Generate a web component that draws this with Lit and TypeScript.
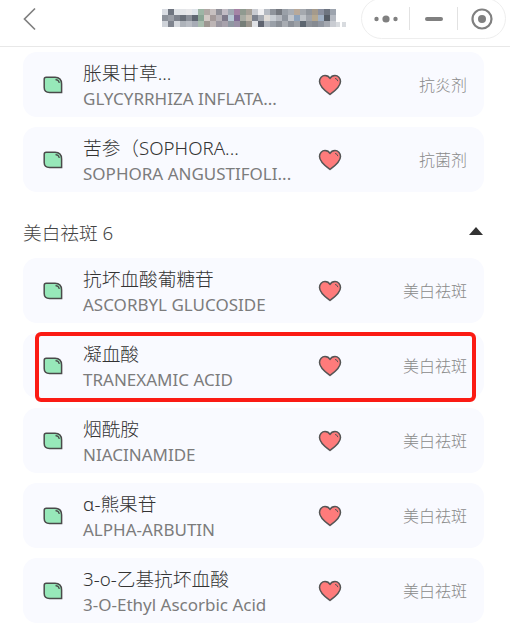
import { LitElement, html, css, svg } from "lit";
import { customElement } from "lit/decorators.js";

const leaf = html`<svg class="leaf" width="20" height="18" viewBox="0 0 20 18"><path d="M1.2 3.2Q1.2 1.2 3.2 1.2H12Q18.6 1.2 18.6 8V16.6H6.5Q1.2 16.6 1.2 11.5Z" fill="#97e8b9" stroke="#4a4a4a" stroke-width="1.5"/><path d="M12.5 3.7Q15.8 4 16.3 7" fill="none" stroke="#4a4a4a" stroke-width="1.2"/></svg>`;
const heart = html`<svg class="heart" width="24" height="22" viewBox="0 0 24 22"><path d="M12 20.5C8 17.5 1.5 13 1.5 7.5C1.5 4 4 1.5 7 1.5C9 1.5 11 2.5 12 4.5C13 2.5 15 1.5 17 1.5C20 1.5 22.5 4 22.5 7.5C22.5 13 16 17.5 12 20.5Z" fill="#ff7b7b" stroke="#555" stroke-width="1.5" stroke-linejoin="round"/><path d="M17 4.4Q19.4 4.8 19.9 7.2" fill="none" stroke="#555" stroke-width="1"/></svg>`;

// Pixelated title: column tones of the mosaic in the reference, three rows each.
const cols: string[][] = [
  ["#d9dce2", "#8d929b", "#cfd3d9"],
  ["#6f7580", "#9a9ea6", "#7f848e"],
  ["#dfe2e6", "#7d828c", "#d5d8dd"],
  ["#e3e5e8", "#6a7079", "#aeb3ba"],
  ["#e8e8ea", "#8a8f98", "#b9bdc4"],
  ["#dfe4ea", "#5f6672", "#a7acb6"],
  ["#9db5a5", "#8aa595", "#a8bdae"],
  ["#b0a8a5", "#d2c9c5", "#9e9792"],
  ["#c7c0c0", "#a49a9a", "#bdb5b5"],
  ["#8f8f98", "#b5b0b5", "#9a96a0"],
  ["#c2bcc4", "#7f7a8a", "#a8a2ac"],
  ["#a0a8b2", "#b8c8d4", "#8f98a2"],
  ["#a583a5", "#806a94", "#9a90a6"],
  ["#8f9a90", "#a8aca4", "#767e78"],
  ["#a6a098", "#c4bcb0", "#9a948c"],
  ["#c9ccd2", "#7c828e", "#e0e2e6"],
  ["#f0f0f2", "#a5aab2", "#5f6470"],
  ["#b5bac2", "#e0dcd8", "#b0b4bc"],
  ["#8f949c", "#c9ced4", "#9aa0a8"],
  ["#74787f", "#b4b8bf", "#8a8f96"],
  ["#9aa0a8", "#8f959e", "#a8acb2"],
  ["#a8adb4", "#c2c6cc", "#8b9098"],
  ["#b8a99a", "#8fa3bb", "#9ca0a6"],
  ["#a5a9af", "#bfc3c8", "#5d6670"],
  ["#90959c", "#a0a4ab", "#8d9299"],
  ["#a49a8c", "#b5a890", "#868b92"],
  ["#8a90a0", "#a0b0c4", "#9096a0"],
  ["#6d7480", "#555c66", "#a4a8b0"],
  ["#9da4ae", "#b5bac2", "#c9ccd2"],
];

const rows1 = [
  ["胀果甘草...", "GLYCYRRHIZA INFLATA...", "抗炎剂"],
  ["苦参（SOPHORA...", "SOPHORA ANGUSTIFOLI...", "抗菌剂"],
];
const rows2 = [
  ["抗坏血酸葡糖苷", "ASCORBYL GLUCOSIDE", "美白祛斑"],
  ["凝血酸", "TRANEXAMIC ACID", "美白祛斑"],
  ["烟酰胺", "NIACINAMIDE", "美白祛斑"],
  ["α-熊果苷", "ALPHA-ARBUTIN", "美白祛斑"],
  ["3-o-乙基抗坏血酸", "3-O-Ethyl Ascorbic Acid", "美白祛斑"],
];

@customElement("app-root")
export class AppRoot extends LitElement {
  static styles = css`
    :host { display: block; position: relative; width: 510px; height: 627px; overflow: hidden; background: #fff;
      font-family: "Noto Sans", "Noto Sans CJK SC", sans-serif; font-weight: 300; color: #333; }
    .nav { height: 47px; box-sizing: border-box; border-bottom: 1px solid #e8e8e8; display: flex; align-items: center; padding: 0 0 9px 23px; position: relative; }
    .back { display: block; }
    .mosaic { position: absolute; left: 162px; top: 9px; }
    .capsule { position: absolute; left: 361px; top: -2px; width: 145px; height: 41px; box-sizing: border-box; border: 1px solid #eeeeee; border-radius: 21px; background: #fff; display: flex; align-items: center; }
    .cell { flex: 1; display: flex; align-items: center; justify-content: center; }
    .sep { width: 1px; height: 23px; background: #e2e2e2; }
    .list { padding: 5px 26px 0 23px; display: flex; flex-direction: column; gap: 10px; }
    .card { height: 65px; background: #f9faff; border-radius: 14px; display: flex; align-items: center; padding: 0 17px 0 20px; }
    .leaf { flex: none; margin-top: 1px; }
    .names { margin-left: 20px; width: 235px; flex: none; height: 50px; margin-top: 2px; }
    .cn { font-size: 18.7px; line-height: 24px; height: 26px; color: #333; white-space: nowrap; }
    .en { font-size: 17px; line-height: 24px; height: 24px; color: #7c7c7c; white-space: nowrap; font-weight: 400; }
    .heart { flex: none; margin-top: 1px; }
    .tag { margin-left: auto; font-size: 16px; color: #8a8a8a; margin-top: -2px; }
    .sec { height: 66px; display: flex; align-items: center; justify-content: space-between; padding: 13px 27px 0 23px; box-sizing: border-box; font-size: 18.7px; color: #444; }
    .tri { width: 0; height: 0; border-left: 7px solid transparent; border-right: 7px solid transparent; border-bottom: 8px solid #333; margin-top: -1px; }
    .list2 { padding-top: 0; }
    .mark { position: absolute; left: 35px; top: 332px; width: 441px; height: 70px; box-sizing: border-box; border: 4px solid #fb1b14; border-radius: 6px; }
  `;
  card(r: string[]) {
    return html`<div class="card">${leaf}<div class="names"><div class="cn">${r[0]}</div><div class="en">${r[1]}</div></div>${heart}<div class="tag">${r[2]}</div></div>`;
  }
  render() {
    return html`
      <div class="nav">
        <svg class="back" width="14" height="24" viewBox="0 0 14 24"><path d="M12 1.5L1.5 12L12 22.5" fill="none" stroke="#808080" stroke-width="1.7"/></svg>
        <svg class="mosaic" width="188" height="20" viewBox="0 0 188 20" shape-rendering="crispEdges">
          ${cols.map((col, i) => col.map((c, j) => svg`<rect x=${i * 6} y=${j * 6} width="6" height="6" fill=${c}/>`))}
          <rect x="174" y="13" width="4" height="5" fill="#d8dbdf"/><rect x="180" y="13" width="4" height="5" fill="#d8dbdf"/>
        </svg>
        <div class="capsule">
          <div class="cell"><svg width="26" height="10" viewBox="0 0 26 10"><circle cx="3.5" cy="5" r="2.2" fill="#808080"/><circle cx="13" cy="5" r="3.6" fill="#808080"/><circle cx="22.5" cy="5" r="2.2" fill="#808080"/></svg></div>
          <div class="sep"></div>
          <div class="cell"><svg width="20" height="6" viewBox="0 0 20 6"><rect x="1" y="1" width="18" height="4" rx="2" fill="#808080"/></svg></div>
          <div class="sep"></div>
          <div class="cell"><svg width="24" height="24" viewBox="0 0 24 24"><circle cx="12" cy="12" r="9.5" fill="none" stroke="#808080" stroke-width="2.2"/><circle cx="12" cy="12" r="4" fill="#808080"/></svg></div>
        </div>
      </div>
      <div class="list">${rows1.map((r) => this.card(r))}</div>
      <div class="sec"><span>美白祛斑 6</span><span class="tri"></span></div>
      <div class="list list2">${rows2.map((r) => this.card(r))}</div>
      <div class="mark"></div>
    `;
  }
}
